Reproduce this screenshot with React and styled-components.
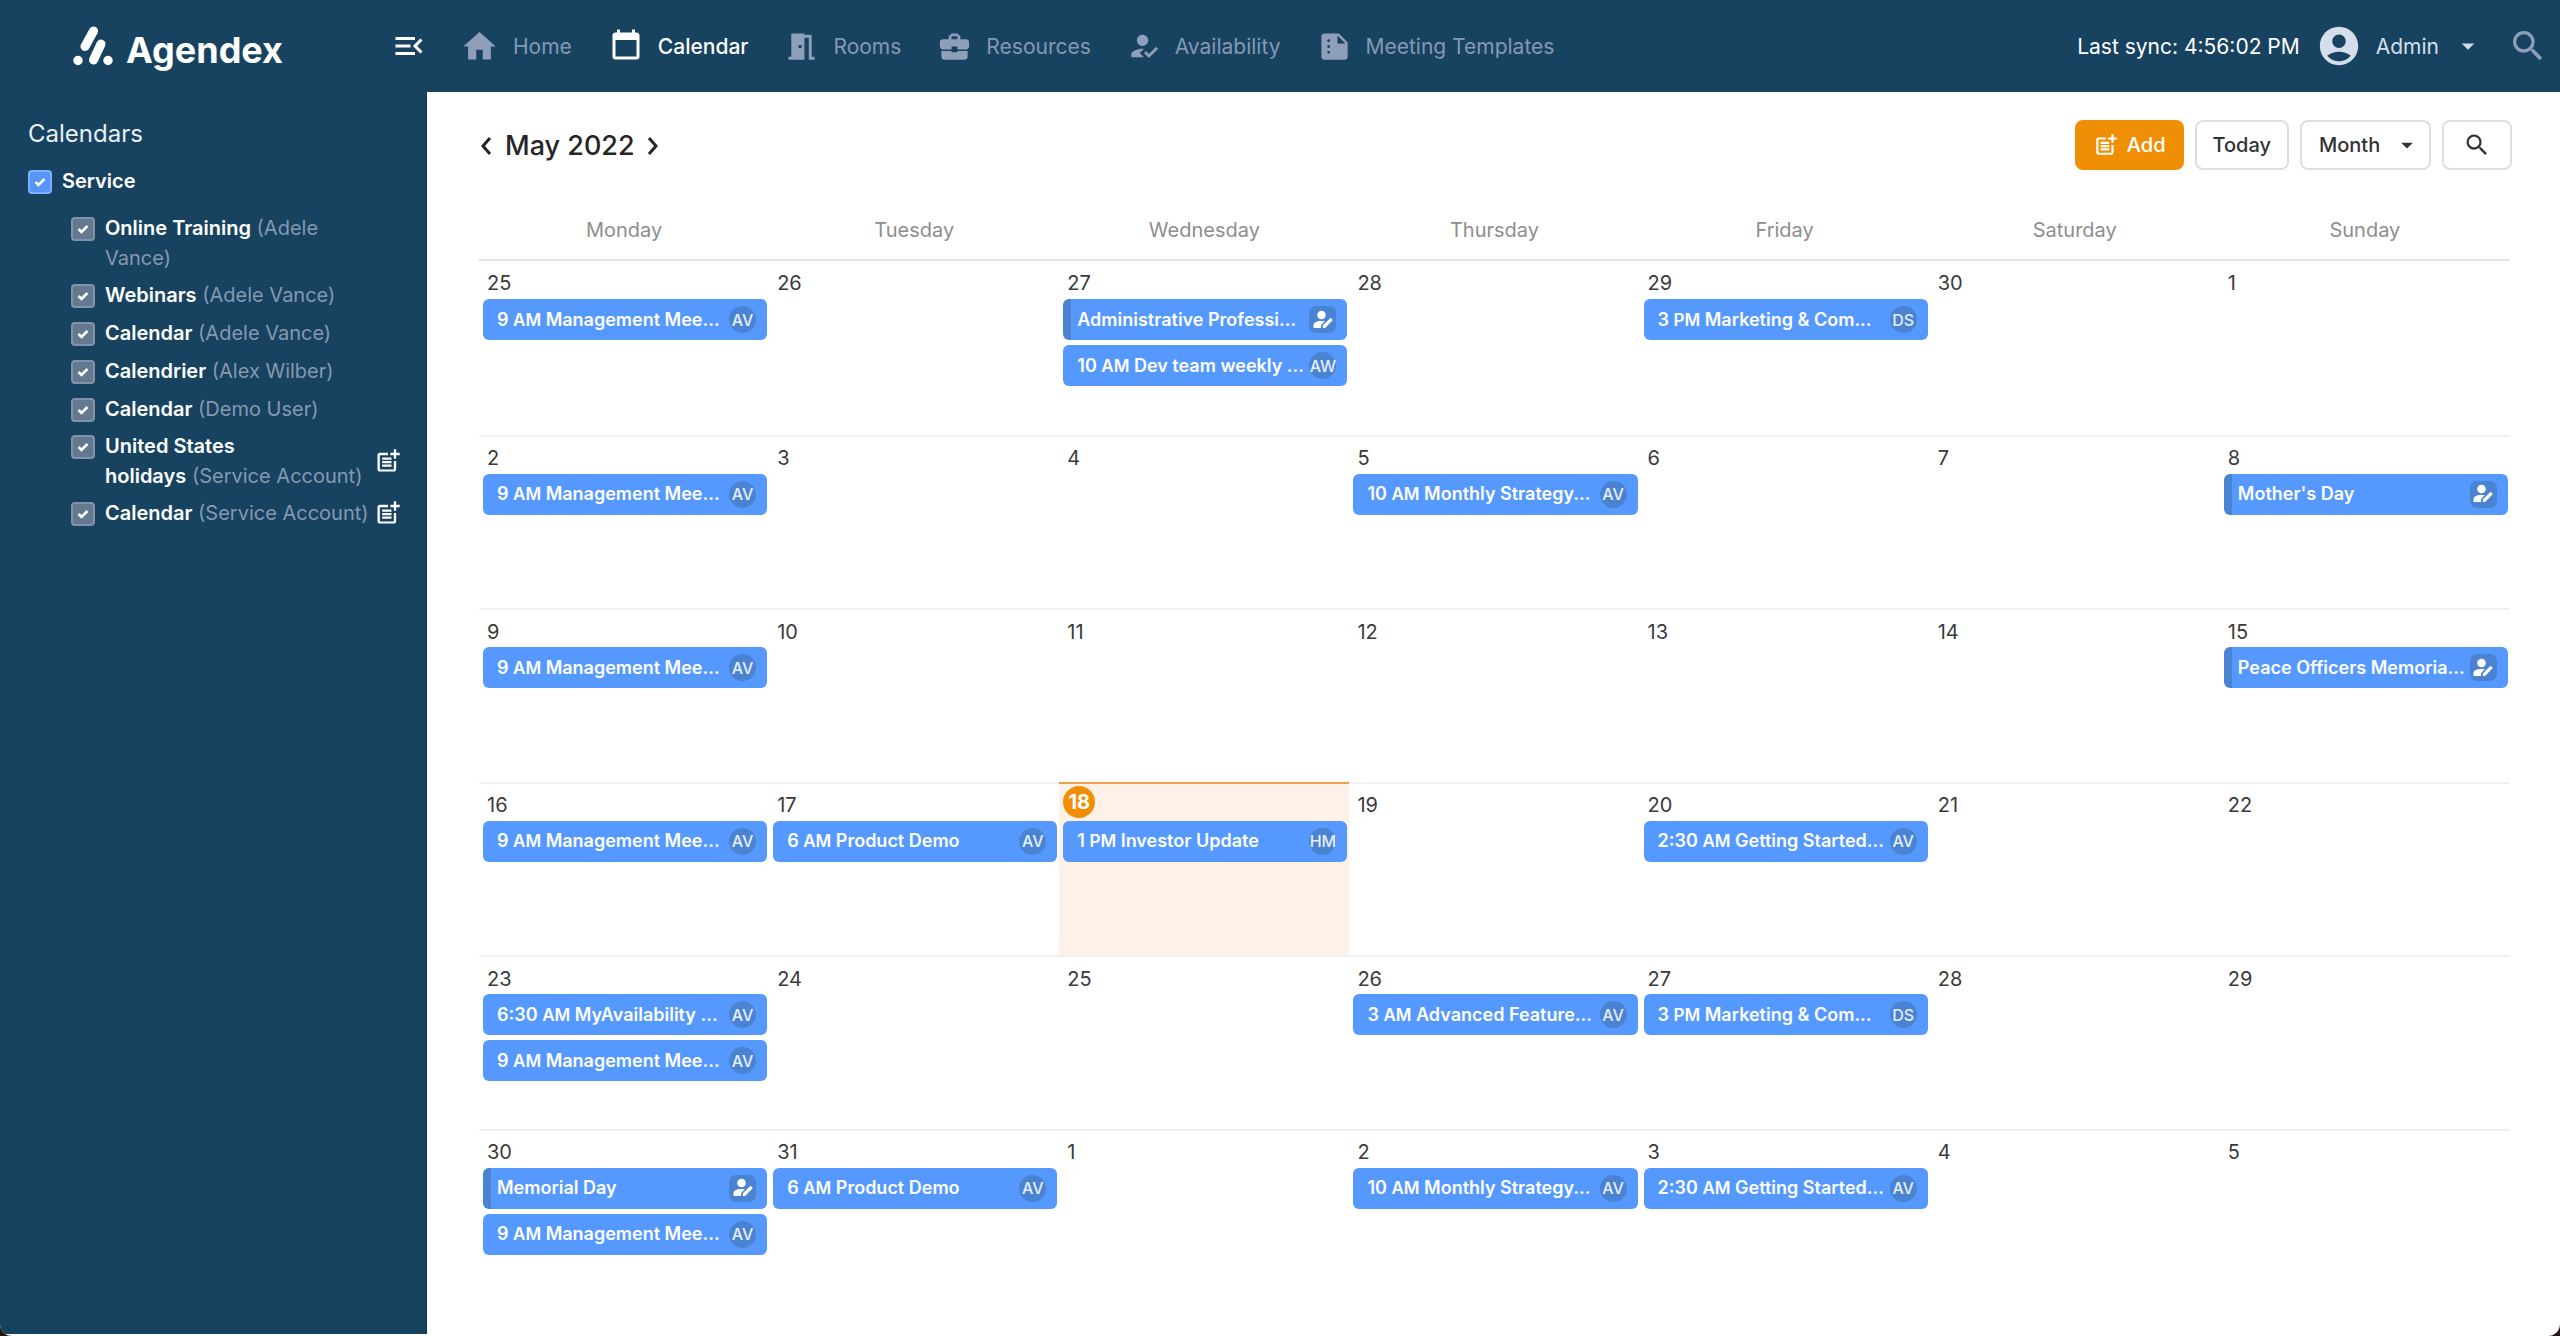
import React, { Fragment } from "react";
import styled, { createGlobalStyle, css } from "styled-components";
import {
  MdAccountCircle,
  MdArrowDropDown,
  MdBusinessCenter,
  MdHome,
  MdHowToReg,
  MdMeetingRoom,
  MdMenuOpen,
  MdPostAdd,
  MdSearch,
  MdSummarize,
} from "react-icons/md";

const color = {
  navy: "#174361",
  navyEdge: "#0f3350",
  muted: "#8499b1",
  icon: "#8f9fb9",
  event: "#5599ff",
  eventDark: "#4b83d3",
  orange: "#f08f05",
  today: "#fef2e8",
  ink: "#3a3a3a",
  line: "#e4e4e4",
};

const GlobalStyle = createGlobalStyle`
  *, *::before, *::after { box-sizing: border-box; }
  body {
    margin: 0;
    background: #25160f;
    font-family: Inter, "Liberation Sans", sans-serif;
    font-size: 20px;
    color: ${color.ink};
  }
  button, select, input { font: inherit; color: inherit; margin: 0; }
  svg { flex: none; display: block; }
`;

const Shell = styled.div`
  display: flex;
  flex-direction: column;
  min-height: 100vh;
  padding-bottom: 2px;
  background: #fff;
  border-radius: 0 0 12px 12px;
  overflow: hidden;
`;

const TopBar = styled.header`
  display: flex;
  align-items: center;
  height: 92px;
  background: ${color.navy};
  color: #fff;
  font-size: 21px;
`;

const Brand = styled.a`
  display: flex;
  align-items: center;
  gap: 13px;
  width: 391px;
  padding: 0 0 0 73px;
  color: #fff;
  font-size: 36px;
  font-weight: 700;
  line-height: 44px;
  text-decoration: none;
`;

const BrandName = styled.span`
  padding-top: 8px;
`;

const IconButton = styled.button`
  display: flex;
  padding: 0;
  border: 0;
  background: none;
  color: ${(p) => p.$tone || "#fff"};
`;

const Nav = styled.nav`
  display: flex;
  align-items: center;
  gap: 36px;
  margin-left: 33px;
`;

const NavLink = styled.a`
  display: flex;
  align-items: center;
  gap: 14px;
  font-weight: ${(p) => (p.$active ? 500 : 400)};
  color: ${(p) => (p.$active ? "#fff" : color.muted)};
  text-decoration: none;
  white-space: nowrap;
  svg {
    color: ${(p) => (p.$active ? "#fff" : color.icon)};
  }
`;

const Account = styled.div`
  display: flex;
  align-items: center;
  margin-left: auto;
  padding-right: 12px;
`;

const Sync = styled.span`
  margin-right: 16px;
`;

const UserButton = styled.button`
  display: flex;
  align-items: center;
  gap: 14px;
  margin-right: 25px;
  padding: 0;
  border: 0;
  background: none;
  color: #d5deea;
`;

const Body = styled.div`
  display: flex;
  flex: 1;
`;

const Sidebar = styled.aside`
  width: 427px;
  padding: 25px 24px 24px 28px;
  background: ${color.navy};
  border-right: 1px solid ${color.navyEdge};
  color: #fff;
`;

const SidebarTitle = styled.h2`
  margin: 0 0 16px;
  font-size: 24px;
  font-weight: 400;
  line-height: 33px;
  color: #e9f0f6;
`;

const CalendarList = styled.ul`
  display: flex;
  flex-direction: column;
  gap: 6px;
  margin: 17px 0 0 43px;
  padding: 0;
  list-style: none;
`;

const CalendarItem = styled.li`
  display: flex;
  align-items: center;
  justify-content: space-between;
  min-height: 32px;
`;

const CheckLabel = styled.label`
  display: flex;
  align-items: flex-start;
  gap: 10px;
  line-height: 30px;
`;

const CalendarName = styled.span`
  white-space: nowrap;
  color: ${color.muted};
  b {
    font-weight: 600;
    color: #fff;
  }
`;

const CheckBox = styled.span`
  display: inline-grid;
  flex: none;
  place-items: center;
  margin-top: 4px;
  > * {
    grid-area: 1 / 1;
  }
  svg {
    pointer-events: none;
  }
  input {
    appearance: none;
    width: 24px;
    height: 24px;
    border: 2px solid #7f93a9;
    border-radius: 4px;
    background: #64788f;
    ${(p) =>
      p.$primary &&
      css`
        border-color: #7fb0ff;
        background: #5795fb;
      `}
  }
`;

const Main = styled.main`
  display: flex;
  flex: 1;
  flex-direction: column;
  min-width: 0;
  padding: 27px 48px 32px 52px;
`;

const Toolbar = styled.div`
  display: flex;
  align-items: center;
  justify-content: space-between;
  height: 51px;
`;

const Period = styled.div`
  display: flex;
  align-items: center;
  gap: 10px;
  padding-top: 3px;
  color: #262626;
`;

const PeriodTitle = styled.h1`
  margin: 0;
  font-size: 27px;
  font-weight: 500;
  line-height: 34px;
`;

const Actions = styled.div`
  display: flex;
  gap: 11px;
`;

const frame = css`
  height: 50px;
  border: 2px solid #dedede;
  border-radius: 8px;
  background: #fff;
  color: #333;
  font-weight: 500;
`;

const Button = styled.button`
  ${frame}
  display: flex;
  align-items: center;
  gap: 8px;
  padding: 0 ${(p) => p.$pad || 16}px;
  ${(p) =>
    p.$primary &&
    css`
      border-color: ${color.orange};
      background: ${color.orange};
      color: #fff;
    `}
`;

const SelectBox = styled.label`
  display: inline-grid;
  align-items: center;
  > * {
    grid-area: 1 / 1;
  }
  svg {
    justify-self: end;
    margin-right: 10px;
    color: #333;
    pointer-events: none;
  }
`;

const Select = styled.select`
  ${frame}
  appearance: none;
  width: 131px;
  padding: 0 17px;
`;

const Calendar = styled.table`
  display: flex;
  flex: 1;
  flex-direction: column;
  margin: 29px 2px 0 0;
  thead {
    display: block;
    border-bottom: 2px solid ${color.line};
  }
  tbody {
    display: grid;
    flex: 1;
    grid-auto-rows: 1fr;
  }
`;

const Week = styled.tr`
  display: grid;
  grid-template-columns: repeat(7, minmax(0, 1fr));
`;

const DayName = styled.th`
  padding: 9px 0 7px;
  font-weight: 400;
  line-height: 44px;
  text-align: center;
  color: #8e8e8e;
`;

const Day = styled.td`
  padding: 0 2px 0 4px;
  border-top: 2px solid ${(p) => (p.$today ? "#e9a245" : "#f1f1f1")};
  background: ${(p) => (p.$today ? color.today : "transparent")};
  tr:first-child > & {
    border-top-width: 0;
  }
`;

const DayNumber = styled.div`
  display: flex;
  align-items: center;
  height: 37px;
  padding: 6px 0 0 4px;
  line-height: 24px;
  tr:first-child & {
    height: 38px;
  }
`;

const TodayNumber = styled.span`
  display: flex;
  align-items: center;
  justify-content: center;
  width: 32px;
  height: 32px;
  margin: 2px 0 3px;
  border-radius: 50%;
  background: ${color.orange};
  color: #fff;
  font-weight: 700;
`;

const EventList = styled.div`
  display: flex;
  flex-direction: column;
  gap: 5px;
`;

const Event = styled.button`
  display: flex;
  align-items: center;
  height: 41px;
  padding: 0 11px 0 ${(p) => (p.$allDay ? 6 : 14)}px;
  border: 0 solid ${color.eventDark};
  border-left-width: ${(p) => (p.$allDay ? 8 : 0)}px;
  border-radius: 6px;
  background: ${color.event};
  color: #fff;
  font-size: 18px;
  font-weight: 600;
  line-height: 24px;
  text-align: left;
`;

const EventTitle = styled.span`
  flex: 1;
  min-width: 0;
  white-space: nowrap;
  small {
    font-size: 17px;
  }
`;

const Badge = styled.span`
  display: flex;
  align-items: center;
  justify-content: center;
  width: 27px;
  height: 27px;
  border-radius: ${(p) => (p.$square ? "7px" : "50%")};
  background: ${color.eventDark};
  color: #e6efff;
  font-size: 16px;
  font-weight: 500;
  white-space: nowrap;
`;

const LogoMark = () => (
  <svg width="40" height="40" viewBox="0 0 40 40" aria-hidden="true">
    <g stroke="#fff" strokeLinecap="round" strokeWidth="9">
      <path d="M20.5 5 12 20.500" />
      <path d="M28 18 20.500 34" />
    </g>
    <circle cx="5" cy="34.500" r="4.700" fill="#fff" />
    <circle cx="35" cy="34.500" r="4.700" fill="#fff" />
  </svg>
);

const CalendarIcon = () => (
  <svg width="36" height="36" viewBox="0 0 24 24" fill="currentColor" aria-hidden="true">
    <path d="M19 19H5V8H19M16 1V3H8V1H6V3H5C3.890 3 3 3.890 3 5V19A2 2 0 0 0 5 21H19A2 2 0 0 0 21 19V5C21 3.890 20.100 3 19 3H18V1" />
  </svg>
);

const Tick = () => (
  <svg width="12" height="10" viewBox="0 0 12 10" fill="none" aria-hidden="true">
    <path d="M1.500 5 4.500 8 10.500 2" stroke="#fff" strokeWidth="2.600" />
  </svg>
);

const Chevron = ({ d }) => (
  <svg width="16" height="20" viewBox="0 0 16 20" fill="none" aria-hidden="true">
    <path d={d} stroke="currentColor" strokeWidth="3" />
  </svg>
);

const PersonEdit = () => (
  <svg width="20" height="20" viewBox="0 0 20 20" fill="#fff" aria-hidden="true">
    <circle cx="8.500" cy="5" r="4.300" />
    <path d="M.5 18v-2.500C.5 12.600 3.500 11 7.500 11h4.300L8 15.200V18z" />
    <path d="M17.600 7.800 19.800 10 12.200 18H9.800v-2.400z" />
  </svg>
);

const navItems = [
  ["Home", <MdHome size={39} />],
  ["Calendar", <CalendarIcon />, true],
  ["Rooms", <MdMeetingRoom size={35} />],
  ["Resources", <MdBusinessCenter size={35} />],
  ["Availability", <MdHowToReg size={34} />],
  ["Meeting Templates", <MdSummarize size={35} />],
];

const calendars = [
  { name: ["Online Training"], owner: ["(Adele", "Vance)"] },
  { name: ["Webinars"], owner: ["(Adele Vance)"] },
  { name: ["Calendar"], owner: ["(Adele Vance)"] },
  { name: ["Calendrier"], owner: ["(Alex Wilber)"] },
  { name: ["Calendar"], owner: ["(Demo User)"] },
  { name: ["United States", "holidays"], owner: ["(Service Account)"], canAdd: true },
  { name: ["Calendar"], owner: ["(Service Account)"], canAdd: true },
];

const dayNames = ["Monday", "Tuesday", "Wednesday", "Thursday", "Friday", "Saturday", "Sunday"];

const timed = (hour, half, title, who) => ({ hour, half, title, who });
const allDay = (title) => ({ title, allDay: true });

const management = timed("9", "AM", "Management Mee...", "AV");
const demo = timed("6", "AM", "Product Demo", "AV");
const strategy = timed("10", "AM", "Monthly Strategy...", "AV");
const marketing = timed("3", "PM", "Marketing & Com...", "DS");
const started = timed("2:30", "AM", "Getting Started...", "AV");

const weeks = [
  [
    [25, management],
    [26],
    [27, allDay("Administrative Professi..."), timed("10", "AM", "Dev team weekly ...", "AW")],
    [28],
    [29, marketing],
    [30],
    [1],
  ],
  [[2, management], [3], [4], [5, strategy], [6], [7], [8, allDay("Mother's Day")]],
  [[9, management], [10], [11], [12], [13], [14], [15, allDay("Peace Officers Memoria...")]],
  [
    [16, management],
    [17, demo],
    [18, timed("1", "PM", "Investor Update", "HM")],
    [19],
    [20, started],
    [21],
    [22],
  ],
  [
    [23, timed("6:30", "AM", "MyAvailability ...", "AV"), management],
    [24],
    [25],
    [26, timed("3", "AM", "Advanced Feature...", "AV")],
    [27, marketing],
    [28],
    [29],
  ],
  [[30, allDay("Memorial Day"), management], [31, demo], [1], [2, strategy], [3, started], [4], [5]],
];

const Lines = ({ lines, as: Tag = "span" }) =>
  lines.map((line, i) => (
    <Fragment key={line}>
      {i > 0 && <br />}
      <Tag>{line}</Tag>
    </Fragment>
  ));

const EventChip = ({ event }) => (
  <Event type="button" $allDay={event.allDay}>
    <EventTitle>
      {event.hour && (
        <>
          {event.hour} <small>{event.half}</small>{" "}
        </>
      )}
      {event.title}
    </EventTitle>
    <Badge $square={event.allDay}>{event.allDay ? <PersonEdit /> : event.who}</Badge>
  </Event>
);

const Check = ({ primary }) => (
  <CheckBox $primary={primary}>
    <input type="checkbox" defaultChecked />
    <Tick />
  </CheckBox>
);

export default function App() {
  return (
    <Shell>
      <GlobalStyle />
      <TopBar>
        <Brand href="#">
          <LogoMark />
          <BrandName>Agendex</BrandName>
        </Brand>
        <IconButton type="button" aria-label="Collapse menu">
          <MdMenuOpen size={36} />
        </IconButton>
        <Nav>
          {navItems.map(([label, icon, active]) => (
            <NavLink key={label} href="#" $active={active}>
              {icon}
              {label}
            </NavLink>
          ))}
        </Nav>
        <Account>
          <Sync>Last sync: 4:56:02 PM</Sync>
          <UserButton type="button">
            <MdAccountCircle size={46} />
            Admin
            <MdArrowDropDown size={30} />
          </UserButton>
          <IconButton type="button" aria-label="Search" $tone={color.icon}>
            <MdSearch size={40} />
          </IconButton>
        </Account>
      </TopBar>
      <Body>
        <Sidebar>
          <SidebarTitle>Calendars</SidebarTitle>
          <CheckLabel>
            <Check primary />
            <CalendarName>
              <b>Service</b>
            </CalendarName>
          </CheckLabel>
          <CalendarList>
            {calendars.map((c, i) => (
              <CalendarItem key={i}>
                <CheckLabel>
                  <Check />
                  <CalendarName>
                    <Lines lines={c.name} as="b" /> <Lines lines={c.owner} />
                  </CalendarName>
                </CheckLabel>
                {c.canAdd && (
                  <IconButton type="button" aria-label="Add event">
                    <MdPostAdd size={28} />
                  </IconButton>
                )}
              </CalendarItem>
            ))}
          </CalendarList>
        </Sidebar>
        <Main>
          <Toolbar>
            <Period>
              <IconButton type="button" aria-label="Previous month" $tone="#262626">
                <Chevron d="M11 2 4 10 11 18" />
              </IconButton>
              <PeriodTitle>May 2022</PeriodTitle>
              <IconButton type="button" aria-label="Next month" $tone="#262626">
                <Chevron d="M4 2 11 10 4 18" />
              </IconButton>
            </Period>
            <Actions>
              <Button type="button" $primary>
                <MdPostAdd size={26} />
                Add
              </Button>
              <Button type="button">Today</Button>
              <SelectBox>
                <Select aria-label="View" defaultValue="Month">
                  <option>Month</option>
                </Select>
                <MdArrowDropDown size={28} />
              </SelectBox>
              <Button type="button" aria-label="Search events" $pad={19}>
                <MdSearch size={28} />
              </Button>
            </Actions>
          </Toolbar>
          <Calendar>
            <thead>
              <Week>
                {dayNames.map((name) => (
                  <DayName key={name} scope="col">
                    {name}
                  </DayName>
                ))}
              </Week>
            </thead>
            <tbody>
              {weeks.map((week, w) => (
                <Week key={w}>
                  {week.map(([number, ...events], d) => {
                    const today = w === 3 && d === 2;
                    return (
                      <Day key={d} $today={today}>
                        {today ? (
                          <TodayNumber>{number}</TodayNumber>
                        ) : (
                          <DayNumber>{number}</DayNumber>
                        )}
                        <EventList>
                          {events.map((event, e) => (
                            <EventChip key={e} event={event} />
                          ))}
                        </EventList>
                      </Day>
                    );
                  })}
                </Week>
              ))}
            </tbody>
          </Calendar>
        </Main>
      </Body>
    </Shell>
  );
}
